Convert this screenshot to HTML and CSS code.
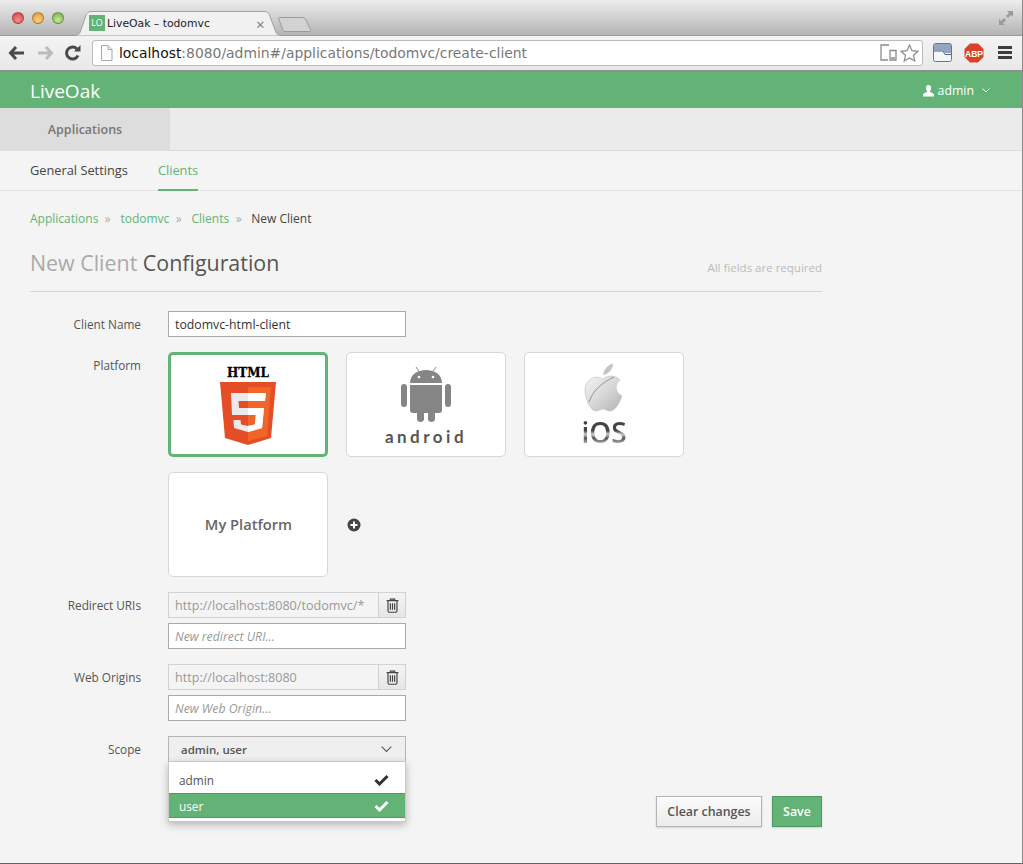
FILE: index.html
```html
<!DOCTYPE html>
<html>
<head>
    <meta charset="utf-8">
    <title>LiveOak - todomvc</title>
    <link rel="stylesheet" href="styles.css">
</head>
<body>

    <!-- browser frame -->
    <div class="titlebar">
        <div class="lights">
            <span class="light red"></span>
            <span class="light amber"></span>
            <span class="light lime"></span>
        </div>
        <div class="tab">
            <svg class="tab-shape" width="206" height="25" viewBox="0 0 206 25">
                <path d="M0 24.500 C4 24 5 22 6 19 L11 4 C12 2 13.500 0.500 16 0.500 L189 0.500 C192 0.500 193.500 2 194.500 4 L200 19 C201 22 202 24 206 24.500" fill="#f1f1f1" stroke="#a2a2a2"/>
            </svg>
            <span class="favicon">LO</span>
            <span class="tab-title">LiveOak – todomvc</span>
            <span class="tab-close">×</span>
        </div>
        <svg class="newtab" width="34" height="17" viewBox="0 0 34 17">
            <path d="M1.500 1.500 L24 1.500 C26 1.500 27 2.500 28 4 L32.500 13.500 C33 15 32 15.500 31 15.500 L8 15.500 C6 15.500 5 14.500 4.500 13 L0.800 3 C0.500 2 0.800 1.500 1.500 1.500 Z" fill="#d2d2d2" stroke="#9a9a9a"/>
        </svg>
        <svg class="expand" width="16" height="16" viewBox="0 0 16 16">
            <path d="M9 1 H15 V7 L13 5 L10 8 L8 6 L11 3 Z M1 15 V9 L3 11 L6 8 L8 10 L5 13 L7 15 Z" fill="#9b9b9b"/>
        </svg>
    </div>

    <div class="toolbar">
        <svg class="tool" width="18" height="16" viewBox="0 0 18 16">
            <path d="M8 2 L2.500 8 L8 14 M3 8 H16" fill="none" stroke="#4a4a4a" stroke-width="3"/>
        </svg>
        <svg class="tool" width="18" height="16" viewBox="0 0 18 16">
            <path d="M10 2 L15.500 8 L10 14 M15 8 H2" fill="none" stroke="#bcbcbc" stroke-width="3"/>
        </svg>
        <svg class="tool" width="18" height="18" viewBox="0 0 18 18">
            <path d="M14 11.500 A6 6 0 1 1 13 5" fill="none" stroke="#4a4a4a" stroke-width="3"/>
            <path d="M10 7.500 H16.500 V1 Z" fill="#4a4a4a"/>
        </svg>
        <div class="omnibox">
            <svg width="13" height="16" viewBox="0 0 13 16">
                <path d="M1.500 0.500 H8 L12 4.500 V15.500 H1.500 Z M8 0.500 V4.500 H12" fill="#fbfbfb" stroke="#a8a8a8"/>
            </svg>
            <span class="url"><b>localhost</b>:8080/admin#/applications/todomvc/create-client</span>
            <svg class="devices" width="17" height="17" viewBox="0 0 17 17">
                <path d="M9 1 H1 V16 H8 M10 6.500 H16 V16 H10 Z" fill="none" stroke="#8b8b8b" stroke-width="1.300"/>
                <path d="M11 14 H15" stroke="#8b8b8b" stroke-width="1.500"/>
            </svg>
            <svg width="19" height="18" viewBox="0 0 19 18">
                <path d="M9.500 1 L12 6.700 L18 7.300 L13.500 11.300 L14.800 17 L9.500 14 L4.200 17 L5.500 11.300 L1 7.300 L7 6.700 Z" fill="#fff" stroke="#8b8b8b" stroke-width="1.200"/>
            </svg>
        </div>
        <svg class="ext-window" width="19" height="19" viewBox="0 0 19 19">
            <rect x="0.500" y="0.500" width="18" height="18" rx="2" fill="#f4f6fa" stroke="#5f7799"/>
            <path d="M1 1 H18 V10 H12 L10 7.500 H1 Z" fill="#93a5c0"/>
            <path d="M1 8 H10 L12 11.500 H18" fill="none" stroke="#4f6a90"/>
        </svg>
        <svg class="ext-abp" width="20" height="20" viewBox="0 0 20 20">
            <path d="M6 0.500 H14 L19.500 6 V14 L14 19.500 H6 L0.500 14 V6 Z" fill="#d8412b"/>
            <text x="10" y="13.500" text-anchor="middle" class="abp-text">ABP</text>
        </svg>
        <div class="hamburger"><span></span><span></span><span></span></div>
    </div>

    <!-- app -->
    <header class="app-header">
        <div class="brand">LiveOak</div>
        <div class="user">
            <svg width="11" height="12" viewBox="0 0 11 12">
                <path d="M5.500 0 C7.500 0 8 1.500 8 3 C8 4.500 7.500 5.500 6.800 6.300 C6.800 7.500 11 8 11 10 V11.500 H0 V10 C0 8 4.200 7.500 4.200 6.300 C3.500 5.500 3 4.500 3 3 C3 1.500 3.500 0 5.500 0 Z" fill="#fff"/>
            </svg>
            <span>admin</span>
            <svg class="caret" width="8" height="5" viewBox="0 0 8 5">
                <path d="M0.500 0.500 L4 4 L7.500 0.500" fill="none" stroke="#fff"/>
            </svg>
        </div>
    </header>

    <nav class="main-nav">
        <a class="main-nav-item">Applications</a>
    </nav>

    <nav class="sub-nav">
        <a class="sub-nav-item">General Settings</a>
        <a class="sub-nav-item active">Clients</a>
    </nav>

    <main class="content">
        <div class="breadcrumb">
            <a>Applications</a><i>»</i>
            <a>todomvc</a><i>»</i>
            <a>Clients</a><i>»</i>
            <span>New Client</span>
        </div>

        <div class="page-head">
            <h1><span>New Client</span> Configuration</h1>
            <small>All fields are required</small>
        </div>

        <form class="form">
            <div class="row">
                <label>Client Name</label>
                <input class="field" type="text" value="todomvc-html-client">
            </div>

            <div class="row">
                <label>Platform</label>
                <div class="platforms">
                    <div class="card selected">
                        <svg width="56" height="83" viewBox="0 0 56 83">
                            <text x="28" y="14" text-anchor="middle" class="html-word">HTML</text>
                            <path d="M0 19 H56 L51 75 L28 82 L5 75 Z" fill="#e44d26"/>
                            <path d="M28 24 H51 L47 73 L28 78 Z" fill="#f16529"/>
                            <path d="M11 30 H46 L45 38 H18.500 L19 45 H44 L42 65 L28 69 L14 65 L13.500 57 H20.500 L21 61.500 L28 63 L35 61.500 L35.800 52 H12 Z" fill="#ebebeb"/>
                            <path d="M28 30 H46 L45 38 H28 Z M28 45 H44 L42 65 L28 69 V63 L35 61.500 L35.800 52 H28 Z" fill="#fff"/>
                        </svg>
                    </div>
                    <div class="card">
                        <div class="logo-stack">
                            <svg width="50" height="58" viewBox="0 0 50 58">
                                <path d="M15 1 L19 7 M35 1 L31 7" stroke="#8a8a8a" stroke-width="1"/>
                                <path d="M9 17 C9 9 16 4 25 4 C34 4 41 9 41 17 Z" fill="#858585"/>
                                <circle cx="18" cy="11" r="1.300" fill="#fff"/>
                                <circle cx="32" cy="11" r="1.300" fill="#fff"/>
                                <path d="M9 19 H41 V44 C41 46 40 47 38 47 H34 V54 A4 4 0 0 1 27 54 V47 H23 V54 A4 4 0 0 1 16 54 V47 H12 C10 47 9 46 9 44 Z" fill="#858585"/>
                                <rect x="0" y="18" width="6" height="23" rx="3" fill="#858585"/>
                                <rect x="44" y="18" width="6" height="23" rx="3" fill="#858585"/>
                            </svg>
                            <span class="android-word">android</span>
                        </div>
                    </div>
                    <div class="card">
                        <div class="logo-stack">
                            <svg width="40" height="51" viewBox="0 0 40 51">
                                <defs>
                                    <linearGradient id="apple" x1="0" y1="0" x2="1" y2="1">
                                        <stop offset="0" stop-color="#f4f4f4"/>
                                        <stop offset="0.500" stop-color="#d8d8d8"/>
                                        <stop offset="1" stop-color="#b2b2b2"/>
                                    </linearGradient>
                                </defs>
                                <path d="M19 12 C20 6 24 1.500 29 0.500 C29 6 25 11 19 12 Z" fill="#c4c4c4"/>
                                <path d="M19 16 C24 12 31 12 36 17 C31 20 30 29 38 33 C35 42 30 48 26 48 C23 48 22 46 19 46 C16 46 15 48 12 48 C7 48 1 37 1 27 C1 17 11 11 19 16 Z" fill="url(#apple)" stroke="#bdbdbd" stroke-width="0.600"/>
                                <path d="M5 39 C9 28 17 20 30 14" fill="none" stroke="#7e7e7e" stroke-width="0.800"/>
                            </svg>
                            <span class="ios-word">iOS</span>
                        </div>
                    </div>
                    <div class="card card-text">My Platform</div>
                    <svg class="add-platform" width="14" height="14" viewBox="0 0 14 14">
                        <circle cx="7" cy="7" r="6.500" fill="#444"/>
                        <path d="M7 3.500 V10.500 M3.500 7 H10.500" stroke="#fff" stroke-width="2"/>
                    </svg>
                </div>
            </div>

            <div class="row">
                <label>Redirect URIs</label>
                <div class="stack">
                    <div class="input-group">
                        <input class="field locked" type="text" value="http://localhost:8080/todomvc/*" readonly>
                        <button class="trash" type="button">
                            <svg width="13" height="15" viewBox="0 0 12 14">
                                <path d="M0.500 2.500 H11.500 M4 2.500 V1 H8 V2.500 M1.800 2.500 V12 Q1.800 13.300 3 13.300 H9 Q10.200 13.300 10.200 12 V2.500 M4 5 V11 M6 5 V11 M8 5 V11" fill="none" stroke="#444" stroke-width="1.100"/>
                            </svg>
                        </button>
                    </div>
                    <input class="field" type="text" placeholder="New redirect URI...">
                </div>
            </div>

            <div class="row">
                <label>Web Origins</label>
                <div class="stack">
                    <div class="input-group">
                        <input class="field locked" type="text" value="http://localhost:8080" readonly>
                        <button class="trash" type="button">
                            <svg width="13" height="15" viewBox="0 0 12 14">
                                <path d="M0.500 2.500 H11.500 M4 2.500 V1 H8 V2.500 M1.800 2.500 V12 Q1.800 13.300 3 13.300 H9 Q10.200 13.300 10.200 12 V2.500 M4 5 V11 M6 5 V11 M8 5 V11" fill="none" stroke="#444" stroke-width="1.100"/>
                            </svg>
                        </button>
                    </div>
                    <input class="field" type="text" placeholder="New Web Origin...">
                </div>
            </div>

            <div class="row">
                <label>Scope</label>
                <div class="select">
                    <div class="select-head">
                        <span>admin, user</span>
                        <svg width="11" height="7" viewBox="0 0 11 7">
                            <path d="M0.700 0.700 L5.500 5.500 L10.300 0.700" fill="none" stroke="#555" stroke-width="1.100"/>
                        </svg>
                    </div>
                    <ul class="select-menu">
                        <li>admin
                            <svg width="15" height="12" viewBox="0 0 15 12"><path d="M1.500 6 L5.500 10 L13.500 2" fill="none" stroke="#333" stroke-width="3"/></svg>
                        </li>
                        <li class="picked">user
                            <svg width="15" height="12" viewBox="0 0 15 12"><path d="M1.500 6 L5.500 10 L13.500 2" fill="none" stroke="#fff" stroke-width="3"/></svg>
                        </li>
                    </ul>
                </div>
            </div>

            <div class="actions">
                <button class="btn" type="button">Clear changes</button>
                <button class="btn primary" type="button">Save</button>
            </div>
        </form>
    </main>

</body>
</html>
```

FILE: styles.css
```css
* {
    box-sizing: border-box;
}
html, body {
    margin: 0;
    height: 864px;
    overflow: hidden;
}
body {
    background: #f4f4f4;
    color: #444;
    font-family: "Open Sans", "Noto Sans", sans-serif;
    font-size: 12px;
    border-right: 1px solid #8a8a8a;
    border-bottom: 1px solid #666;
}

/* browser frame */
.titlebar {
    height: 36px;
    display: flex;
    align-items: flex-end;
    padding-left: 12px;
    background: linear-gradient(#ededed, #b4b4b4);
    border-bottom: 1px solid #9a9a9a;
    position: relative;
}
.lights {
    display: flex;
    gap: 8px;
    align-self: flex-start;
    margin-top: 12px;
}
.light {
    width: 12px;
    height: 12px;
    border-radius: 50%;
    border: 1px solid rgba(0, 0, 0, .25);
}
.red { background: radial-gradient(circle at 50% 70%, #f58f8a, #d63a36); }
.amber { background: radial-gradient(circle at 50% 70%, #fbd38a, #de8f24); }
.lime { background: radial-gradient(circle at 50% 70%, #c8ea9d, #6ea83e); }
.tab {
    position: relative;
    width: 206px;
    height: 25px;
    margin-left: 11px;
    margin-bottom: -1px;
    display: flex;
    align-items: center;
    padding: 0 0 1px 14px;
}
.tab-shape {
    position: absolute;
    left: 0;
    top: 0;
}
.favicon {
    position: relative;
    width: 16px;
    height: 16px;
    background: #62b375;
    color: #fff;
    font-size: 9px;
    line-height: 16px;
    text-align: center;
    flex: none;
}
.tab-title {
    position: relative;
    margin-left: 2px;
    font-family: "DejaVu Sans", sans-serif;
    font-size: 10.800px;
    color: #222;
}
.tab-close {
    position: absolute;
    left: 181px;
    top: 3px;
    font-size: 15px;
    color: #777;
}
.newtab {
    margin: 0 0 2px -3px;
}
.expand {
    position: absolute;
    right: 8px;
    top: 10px;
}
.toolbar {
    height: 36px;
    display: flex;
    align-items: center;
    padding: 0 0 1px 8px;
    background: linear-gradient(#f3f3f3, #e9e9e9);
    border-bottom: 2px solid #8f8f8f;
}
.tool {
    margin-right: 10px;
    flex: none;
}
.omnibox {
    flex: none;
    width: 831px;
    height: 26px;
    margin-right: 10px;
    padding: 0 3px 0 7px;
    display: flex;
    align-items: center;
    background: #fff;
    border: 1px solid #bcbcbc;
    border-radius: 3px;
}
.url {
    flex: 1;
    margin-left: 6px;
    font-family: "DejaVu Sans", sans-serif;
    font-size: 13.900px;
    color: #777;
    white-space: nowrap;
}
.url b {
    font-weight: normal;
    color: #111;
}
.devices {
    margin-right: 3px;
}
.ext-abp {
    margin-left: 12px;
    flex: none;
}
.abp-text {
    font-family: "Liberation Sans", sans-serif;
    font-size: 8.500px;
    font-weight: bold;
    fill: #fff;
}
.hamburger {
    margin-left: 14px;
    width: 14px;
    display: flex;
    flex-direction: column;
    gap: 2px;
}
.hamburger span {
    height: 3px;
    background: #3d3d3d;
}

/* app header */
.app-header {
    height: 36px;
    display: flex;
    align-items: center;
    justify-content: space-between;
    padding: 1px 32px 0 30px;
    background: #62b375;
    color: #fff;
}
.brand {
    font-size: 19px;
}
.user {
    display: flex;
    align-items: center;
    gap: 4px;
    font-size: 12.300px;
}
.caret {
    margin-left: 4px;
}
.main-nav {
    height: 43px;
    background: #ebebeb;
    border-bottom: 1px solid #dcdcdc;
}
.main-nav-item {
    display: block;
    width: 170px;
    height: 42px;
    line-height: 44px;
    text-align: center;
    background: #dedddd;
    color: #777;
    font-size: 12.500px;
    font-weight: 600;
}
.sub-nav {
    height: 40px;
    display: flex;
    gap: 30px;
    padding-left: 30px;
    border-bottom: 1px solid #e2e2e2;
}
.sub-nav-item {
    height: 40px;
    line-height: 39px;
    color: #444;
    font-size: 12.800px;
}
.sub-nav-item.active {
    color: #62b375;
    border-bottom: 2px solid #62b375;
}

/* content */
.content {
    width: 852px;
    padding: 0 30px;
}
.breadcrumb {
    margin-top: 20px;
    line-height: 16px;
    font-size: 12px;
    color: #444;
}
.breadcrumb a {
    color: #62b375;
}
.breadcrumb i {
    margin: 0 6.500px;
    font-style: normal;
    color: #aaa;
}
.page-head {
    height: 54px;
    margin-top: 11px;
    padding-bottom: 14px;
    display: flex;
    align-items: flex-end;
    justify-content: space-between;
    border-bottom: 1px solid #d4d4d4;
}
.page-head h1 {
    margin: 0;
    font-size: 21.400px;
    font-weight: normal;
    color: #555;
}
.page-head h1 span {
    color: #aaa;
}
.page-head small {
    font-size: 11.500px;
    color: #bbb;
    margin-bottom: 2px;
}

/* form */
.form {
    display: flex;
    flex-direction: column;
    gap: 15px;
    padding-top: 19px;
}
.row {
    display: flex;
    align-items: flex-start;
    gap: 27px;
}
.row label {
    width: 111px;
    flex: none;
    text-align: right;
    line-height: 26px;
    font-size: 11.800px;
    color: #555;
}
.field {
    display: block;
    width: 238px;
    height: 26px;
    padding: 0 6px;
    background: #fff;
    border: 1px solid #aaa;
    border-radius: 0;
    outline: none;
    font-family: inherit;
    font-size: 12.300px;
    color: #333;
}
.field::placeholder {
    color: #999;
    font-style: italic;
}
.field.locked {
    width: 211px;
    background: #f4f4f4;
    border-color: #d2d2d2;
    font-size: 12.600px;
    color: #999;
}
.platforms {
    width: 540px;
    display: flex;
    flex-wrap: wrap;
    align-items: center;
    gap: 15px 18px;
}
.card {
    width: 160px;
    height: 105px;
    display: flex;
    align-items: center;
    justify-content: center;
    background: #fff;
    border: 1px solid #d6d6d6;
    border-radius: 5px;
}
.card.selected {
    border: 3px solid #62b375;
}
.card-text {
    padding: 0 0 2px 1px;
    color: #666;
    font-size: 14.700px;
    font-weight: 600;
}
.html-word {
    font-family: "DejaVu Serif", serif;
    font-size: 12px;
    font-weight: bold;
    fill: #000;
    stroke: #000;
    stroke-width: .3px;
}
.logo-stack {
    display: flex;
    flex-direction: column;
    align-items: center;
}
.android-word {
    margin-top: 5px;
    font-family: "Lato", sans-serif;
    font-size: 17px;
    font-weight: 700;
    line-height: 15px;
    letter-spacing: 3.500px;
    color: #555;
}
.ios-word {
    margin-top: 4px;
    font-family: "Open Sans", sans-serif;
    font-size: 28px;
    font-weight: 600;
    line-height: 28px;
    background: linear-gradient(#444 45%, #ccc 58%, #555 72%, #ddd);
    -webkit-background-clip: text;
    background-clip: text;
    color: transparent;
}
.add-platform {
    margin-left: 1px;
}
.stack {
    display: flex;
    flex-direction: column;
    gap: 5px;
}
.input-group {
    display: flex;
}
.trash {
    width: 27px;
    height: 26px;
    padding: 0;
    display: flex;
    align-items: center;
    justify-content: center;
    background: linear-gradient(#f4f4f4, #e6e6e6);
    border: 1px solid #d2d2d2;
    border-left: 0;
}

/* scope select */
.select {
    position: relative;
    width: 238px;
}
.select-head {
    height: 26px;
    display: flex;
    align-items: center;
    justify-content: space-between;
    padding: 0 13px 0 12px;
    background: #efefef;
    border: 1px solid #b5b5b5;
    font-size: 11.500px;
    font-weight: 600;
    color: #555;
}
.select-menu {
    position: absolute;
    left: 0;
    top: 25px;
    width: 238px;
    height: 61px;
    margin: 0;
    padding: 5px 0 0;
    list-style: none;
    background: #fff;
    border: 1px solid #c8c8c8;
    box-shadow: 0 3px 8px rgba(0, 0, 0, .25);
    font-size: 11.800px;
    color: #555;
}
.select-menu li {
    height: 26px;
    display: flex;
    align-items: center;
    justify-content: space-between;
    padding: 0 16px 0 10px;
}
.select-menu .picked {
    height: 25px;
    background: #62b375;
    border-top: 1px solid #4f9a62;
    border-bottom: 1px solid #4f9a62;
    color: #fff;
}
.actions {
    display: flex;
    justify-content: flex-end;
    gap: 10px;
    margin-top: 19px;
}
.btn {
    height: 31px;
    width: 106px;
    padding: 0;
    background: linear-gradient(#fbfbfb, #ececec);
    border: 1px solid #b5b5b5;
    box-shadow: 0 1px 2px rgba(0, 0, 0, .15);
    font-family: inherit;
    font-size: 12.400px;
    font-weight: 600;
    color: #555;
}
.btn.primary {
    width: 50px;
    background: #62b375;
    border-color: #4f9a62;
    color: #fff;
}
```
